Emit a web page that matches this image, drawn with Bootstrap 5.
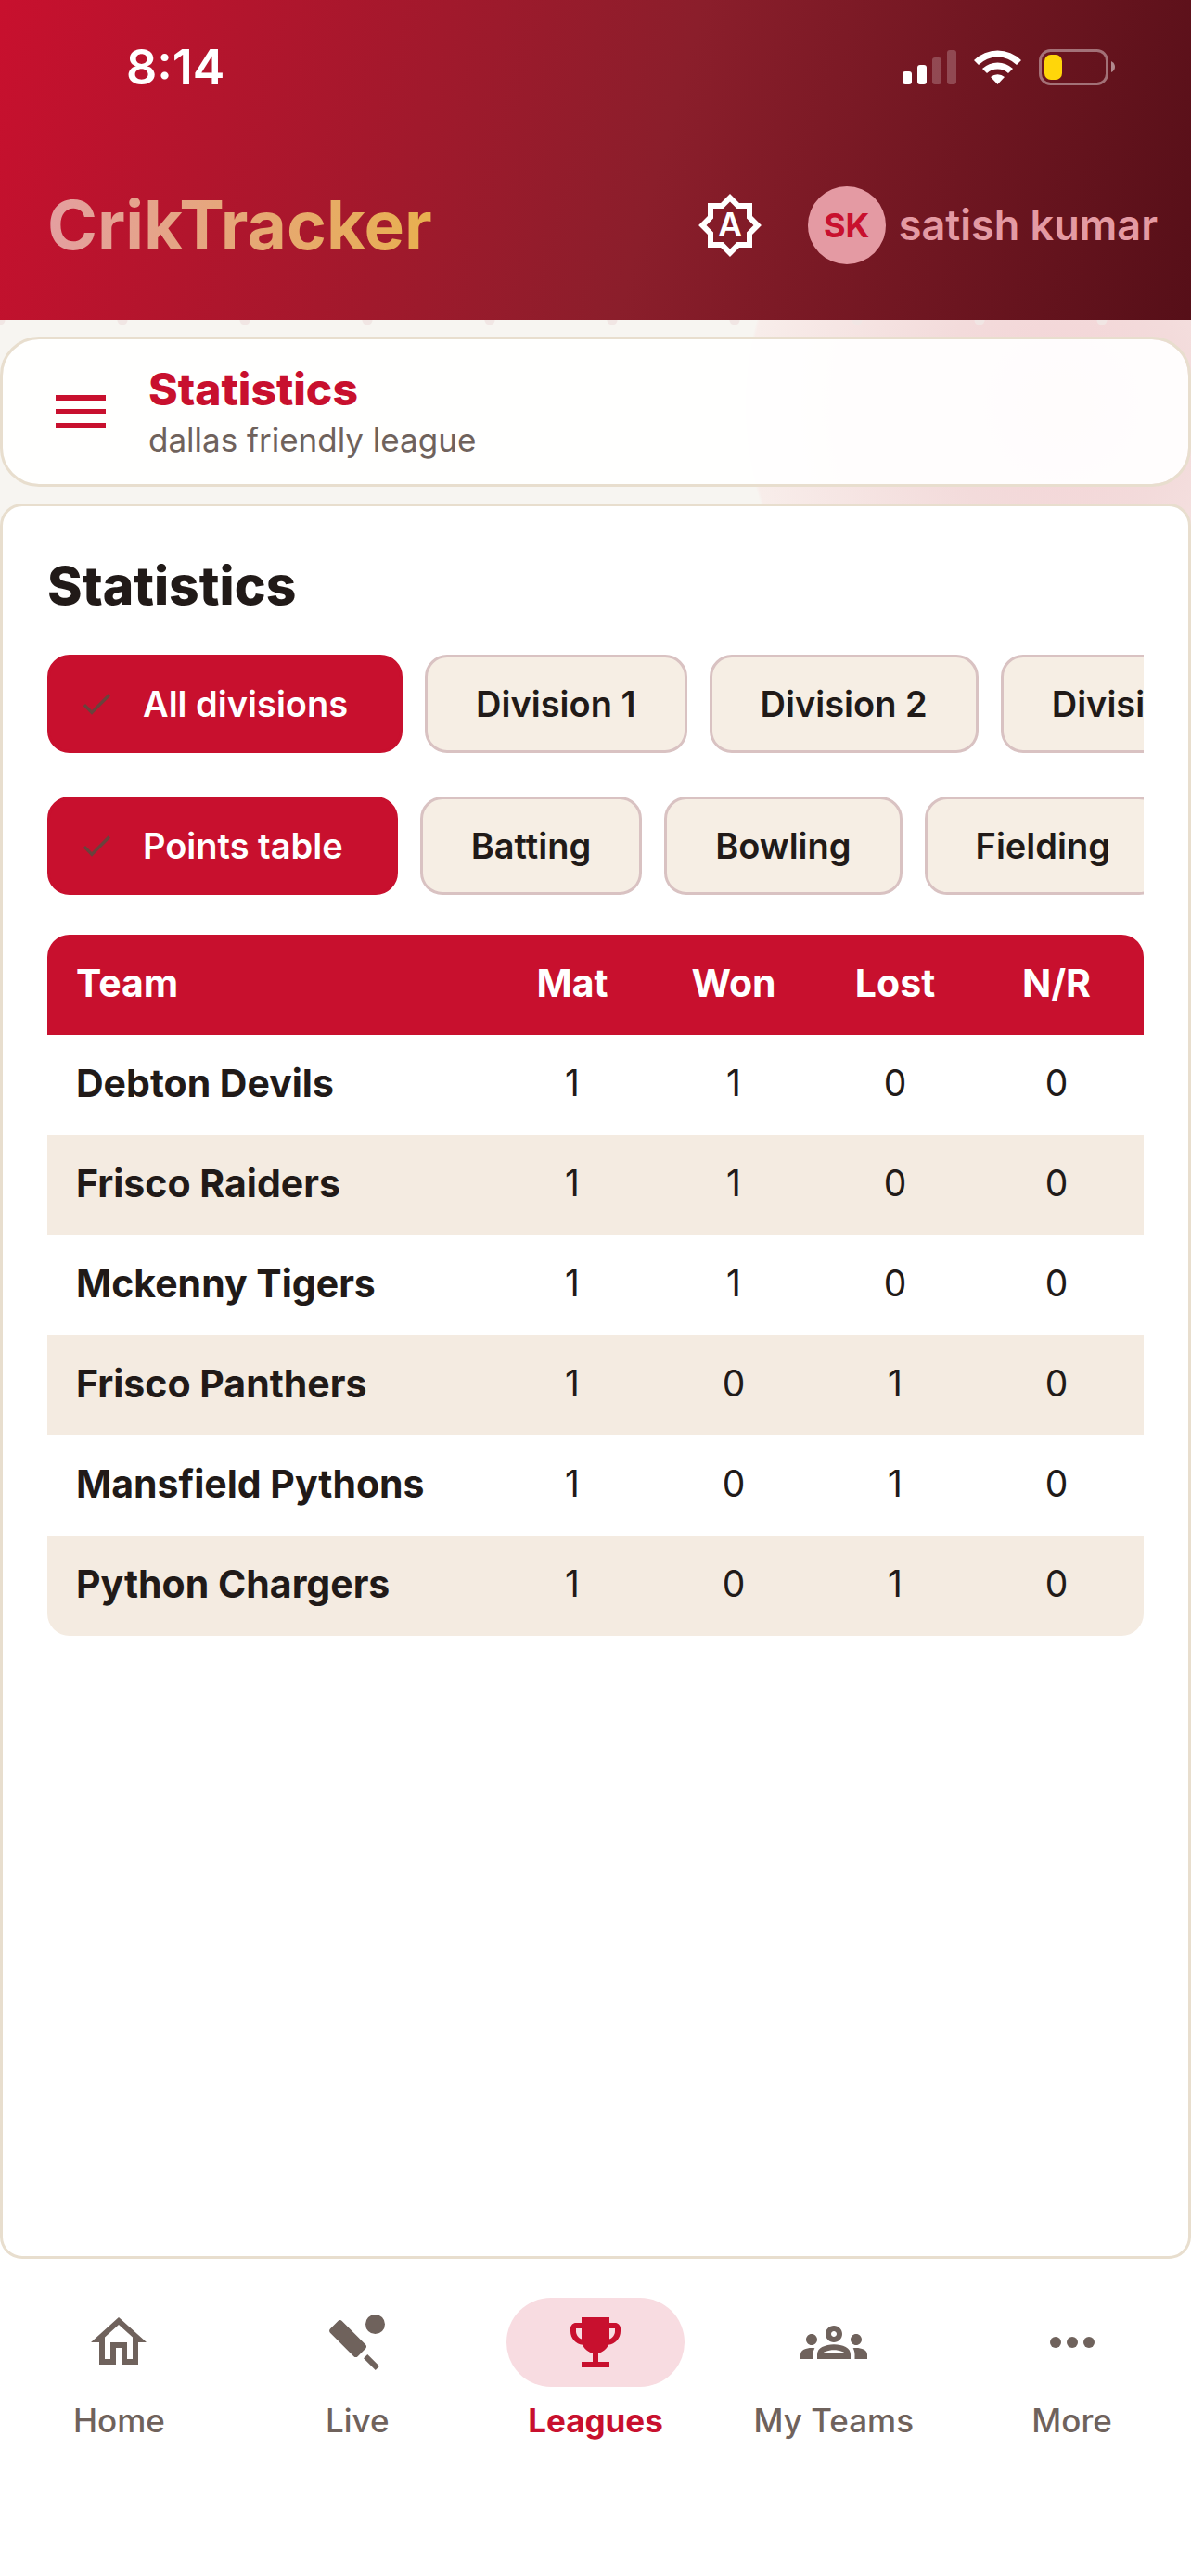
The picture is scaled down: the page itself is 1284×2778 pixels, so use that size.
<!DOCTYPE html>
<html lang="en">
<head>
<meta charset="utf-8">
<meta name="viewport" content="width=device-width, initial-scale=1">
<title>CrikTracker – Statistics</title>
<link href="https://cdn.jsdelivr.net/npm/bootstrap@5.3.0/dist/css/bootstrap.min.css" rel="stylesheet">
<style>
:root { --crimson:#c8102e; --ink:#211a18; --muted-ink:#6f625c; --sand:#f6eee4; --edge:#e8dece; --blush:#e49aa3; }
body { font-family: Inter, "Liberation Sans", sans-serif; color: var(--ink); background:#fff; }
.app-shell { min-height: 100vh; overflow: hidden;
  background:
    radial-gradient(circle at 66px 0, #f1e6e4 5px, transparent 6px) -66px 345px / 132px 8px repeat-x,
    radial-gradient(circle 342px at 1145px 437px, #f4d3d6 0, #f3dbdb 40%, #f8edea 99%, transparent 100%),
    linear-gradient(#f7f5f1 0, #f7f5f1 50%, #fff 50%); }
.app-header { background: linear-gradient(105deg, #c8102e 0, #8b1e2b 55%, #560f18 100%); }
.status-bar { padding: 43px 81px 0 136px; height: 102px; }
.clock { font-size: 52px; line-height: 60px; font-weight: 600; }
.brand-row { padding: 99px 36px 60px 51px; }
.brand { font-size: 73px; line-height: 84px; font-weight: 700; background: linear-gradient(90deg, #e49fa0, #e8b04f); -webkit-background-clip: text; background-clip: text; color: transparent; }
.icon-btn { line-height: 0; border: 0; padding: 0; background: none; }
.menu-btn { color: var(--crimson); }
.ico { width: 72px; height: 72px; fill: currentColor; display: block; }
.avatar { width: 84px; height: 84px; background: var(--blush); color: var(--crimson); font-size: 36px; font-weight: 700; }
.user-name { color: var(--blush); font-size: 45px; line-height: 60px; font-weight: 600; margin-left: 14px; }
.panel { background: #fff; border: 3px solid var(--edge); }
.title-bar { border-radius: 42px; margin-top: 18px; padding: 24px 48px; gap: 37px; background: rgba(255,255,255,.93); background-clip: padding-box; }
.page-name { font-size: 48px; line-height: 60px; font-weight: 800; color: var(--crimson); }
.league-name { font-size: 35px; line-height: 48px; color: var(--muted-ink); }
.stats-panel { border-radius: 24px; margin-top: 18px; padding: 45px 48px; }
.section-title { font-size: 57px; line-height: 81px; font-weight: 800; margin-bottom: 34px; }
.chip-row { gap: 24px; overflow: hidden; }
.chip-row + .chip-row { margin-top: 47px; }
.chip { flex: none; height: 106px; border: 3px solid #d9c2c2; border-radius: 24px; background: var(--sand); color: var(--ink); font-size: 38px; line-height: 48px; font-weight: 600; padding: 0 52px; }
.chip-on { background: var(--crimson); border-color: var(--crimson); color: #fff; padding: 0 56px 0 30px; }
.chip-on svg { width: 40px; height: 40px; margin-right: 30px; fill: #6a423c; }
.points { border-radius: 24px; overflow: hidden; margin-top: 43px; }
.points table { table-layout: fixed; font-size: 39px; line-height: 48px; color: var(--ink); }
.points th, .points td { height: 108px; padding: 0 0 4px; text-align: center; vertical-align: middle; border: 0; background: none; color: inherit; }
.points th { font-size: 41px; font-weight: 700; }
.points th:first-child { text-align: left; padding-left: 31px; }
.points th:last-child, .points td:last-child { padding-right: 7px; }
.points thead { background: var(--crimson); color: #fff; }
.points tbody tr:nth-child(even) { background: #f4ebe1; }
.num-col { width: 174px; } .end-col { width: 181px; }
.tab-bar { background: #fff; padding: 42px 0 144px; }
.tab { color: var(--muted-ink); text-decoration: none; font-size: 35px; line-height: 48px; font-weight: 500; }
.tab-icon { width: 192px; height: 96px; border-radius: 48px; margin-bottom: 12px; }
.tab.active { color: var(--crimson); font-weight: 700; }
.tab.active .tab-icon { background: #f8dce1; }
</style>
</head>
<body>
<div class="app-shell d-flex flex-column">
  <header class="app-header">
    <div class="status-bar d-flex justify-content-between text-white">
      <span class="clock">8:14</span>
      <svg width="231" height="60" viewBox="0 0 231 60" aria-label="Signal, Wi-Fi, battery">
        <g fill="#fff"><rect x="1" y="34" width="10" height="14" rx="3"/><rect x="17" y="27" width="10" height="21" rx="3"/>
        <g opacity=".22"><rect x="33" y="19" width="10" height="29" rx="3"/><rect x="49" y="11" width="10" height="37" rx="3"/></g>
        <path d="M78 22a36 36 0 0 1 51 0l-5 5a29 29 0 0 0-41 0zM87 31a24 24 0 0 1 33 0l-5 5a17 17 0 0 0-23 0zM96 40a12 12 0 0 1 15 0l-7.500 8z"/></g>
        <rect x="149.500" y="11.500" width="72" height="36" rx="11" fill="none" stroke="#fff" stroke-opacity=".4" stroke-width="3"/>
        <rect x="154" y="16" width="19" height="27" rx="7" fill="#ffd60a"/><path d="M226 23q4 2 4 6t-4 6z" fill="#fff" opacity=".5"/>
      </svg>
    </div>
    <div class="brand-row d-flex align-items-center">
      <span class="brand me-auto">CrikTracker</span>
      <button class="icon-btn text-white me-5" type="button" aria-label="Automatic brightness"><svg class="ico" viewBox="0 0 24 24"><path d="M20 8.690V4h-4.690L12 .690 8.690 4H4v4.690L.690 12 4 15.310V20h4.690L12 23.310 15.310 20H20v-4.690L23.310 12 20 8.690zm-2 5.790V18h-3.520L12 20.480 9.520 18H6v-3.520L3.520 12 6 9.520V6h3.520L12 3.520 14.480 6H18v3.520L20.480 12 18 14.480z"/><text x="12" y="16" font-size="12" font-weight="600" text-anchor="middle">A</text></svg></button>
      <span class="avatar rounded-circle d-flex align-items-center justify-content-center">SK</span>
      <span class="user-name">satish kumar</span>
    </div>
  </header>

  <section class="panel title-bar d-flex align-items-center">
    <button class="icon-btn menu-btn" type="button" aria-label="Open menu"><svg class="ico" viewBox="0 0 24 24"><path d="M3 18h18v-2H3zm0-5h18v-2H3zm0-7v2h18V6z"/></svg></button>
    <div><div class="page-name">Statistics</div><div class="league-name">dallas friendly league</div></div>
  </section>

  <main class="panel stats-panel flex-grow-1">
    <h1 class="section-title">Statistics</h1>
    <div class="chip-row d-flex">
      <button type="button" class="chip chip-on d-flex align-items-center" aria-pressed="true"><svg viewBox="0 0 24 24"><path d="M9 16.170 4.830 12l-1.420 1.410L9 19 21 7l-1.410-1.410z"/></svg>All divisions</button>
      <button type="button" class="chip">Division 1</button>
      <button type="button" class="chip">Division 2</button>
      <button type="button" class="chip">Division 3</button>
    </div>
    <div class="chip-row d-flex">
      <button type="button" class="chip chip-on d-flex align-items-center" aria-pressed="true"><svg viewBox="0 0 24 24"><path d="M9 16.170 4.830 12l-1.420 1.410L9 19 21 7l-1.410-1.410z"/></svg>Points table</button>
      <button type="button" class="chip">Batting</button>
      <button type="button" class="chip">Bowling</button>
      <button type="button" class="chip">Fielding</button>
    </div>
    <div class="points">
      <table class="w-100">
        <colgroup><col><col class="num-col"><col class="num-col"><col class="num-col"><col class="end-col"></colgroup>
        <thead><tr><th scope="col">Team</th><th scope="col">Mat</th><th scope="col">Won</th><th scope="col">Lost</th><th scope="col">N/R</th></tr></thead>
        <tbody>
          <tr><th scope="row">Debton Devils</th><td>1</td><td>1</td><td>0</td><td>0</td></tr>
          <tr><th scope="row">Frisco Raiders</th><td>1</td><td>1</td><td>0</td><td>0</td></tr>
          <tr><th scope="row">Mckenny Tigers</th><td>1</td><td>1</td><td>0</td><td>0</td></tr>
          <tr><th scope="row">Frisco Panthers</th><td>1</td><td>0</td><td>1</td><td>0</td></tr>
          <tr><th scope="row">Mansfield Pythons</th><td>1</td><td>0</td><td>1</td><td>0</td></tr>
          <tr><th scope="row">Python Chargers</th><td>1</td><td>0</td><td>1</td><td>0</td></tr>
        </tbody>
      </table>
    </div>
  </main>

  <nav class="tab-bar row g-0 text-center" aria-label="Main">
    <a class="tab col" href="#"><span class="tab-icon mx-auto d-flex align-items-center justify-content-center"><svg class="ico" viewBox="0 0 24 24"><path d="M12 5.690l5 4.500V18h-2v-6H9v6H7v-7.810l5-4.500M12 3L2 12h3v8h6v-6h2v6h6v-8h3L12 3z"/></svg></span>Home</a>
    <a class="tab col" href="#"><span class="tab-icon mx-auto d-flex align-items-center justify-content-center"><svg class="ico" viewBox="0 0 24 24"><path d="M15.050 12.810L6.560 4.320c-.390-.390-1.020-.390-1.410 0L2.320 7.150c-.390.390-.390 1.020 0 1.410l8.490 8.490c.390.390 1.020.390 1.410 0l2.830-2.830c.390-.390.390-1.020 0-1.410z"/><rect x="16.170" y="16.170" width="2" height="6" transform="rotate(-45 17.170 19.170)"/><circle cx="18.500" cy="5.500" r="3.500"/></svg></span>Live</a>
    <a class="tab col active" href="#" aria-current="page"><span class="tab-icon mx-auto d-flex align-items-center justify-content-center"><svg class="ico" viewBox="0 0 24 24"><path d="M19 5h-2V3H7v2H5c-1.100 0-2 .900-2 2v1c0 2.550 1.920 4.630 4.390 4.940.630 1.500 1.980 2.630 3.610 2.960V19H7v2h10v-2h-4v-3.100c1.630-.330 2.980-1.460 3.610-2.960C19.080 12.630 21 10.550 21 8V7c0-1.100-.900-2-2-2zM5 8V7h2v3.820C5.840 10.400 5 9.300 5 8zm14 0c0 1.300-.840 2.400-2 2.820V7h2v1z"/></svg></span>Leagues</a>
    <a class="tab col" href="#"><span class="tab-icon mx-auto d-flex align-items-center justify-content-center"><svg class="ico" viewBox="0 0 24 24"><path d="M4 13c1.100 0 2-.900 2-2s-.900-2-2-2-2 .900-2 2 .900 2 2 2zm1.130 1.100C4.760 14.040 4.390 14 4 14c-.990 0-1.930.210-2.780.580C.480 14.900 0 15.620 0 16.430V18h4.500v-1.610c0-.830.230-1.610.630-2.290zM20 13c1.100 0 2-.900 2-2s-.900-2-2-2-2 .900-2 2 .900 2 2 2zm4 3.430c0-.810-.480-1.530-1.220-1.850-.850-.370-1.790-.580-2.780-.580-.390 0-.760.040-1.130.100.400.680.630 1.460.630 2.290V18H24v-1.570zM16.240 13.650c-1.170-.520-2.610-.900-4.240-.900-1.630 0-3.070.390-4.240.900C6.680 14.130 6 15.210 6 16.390V18h12v-1.610c0-1.180-.680-2.260-1.760-2.740zM8.070 16c.090-.230.130-.390.910-.690.970-.380 1.990-.560 3.020-.560s2.050.180 3.020.560c.770.300.810.460.910.690H8.070zM12 8c.550 0 1 .450 1 1s-.450 1-1 1-1-.450-1-1 .450-1 1-1m0-2c-1.660 0-3 1.340-3 3s1.340 3 3 3 3-1.340 3-3-1.340-3-3-3z"/></svg></span>My Teams</a>
    <a class="tab col" href="#"><span class="tab-icon mx-auto d-flex align-items-center justify-content-center"><svg class="ico" viewBox="0 0 24 24"><circle cx="6" cy="12" r="2"/><circle cx="12" cy="12" r="2"/><circle cx="18" cy="12" r="2"/></svg></span>More</a>
  </nav>
</div>
<script src="https://cdn.jsdelivr.net/npm/bootstrap@5.3.0/dist/js/bootstrap.bundle.min.js"></script>
</body>
</html>
